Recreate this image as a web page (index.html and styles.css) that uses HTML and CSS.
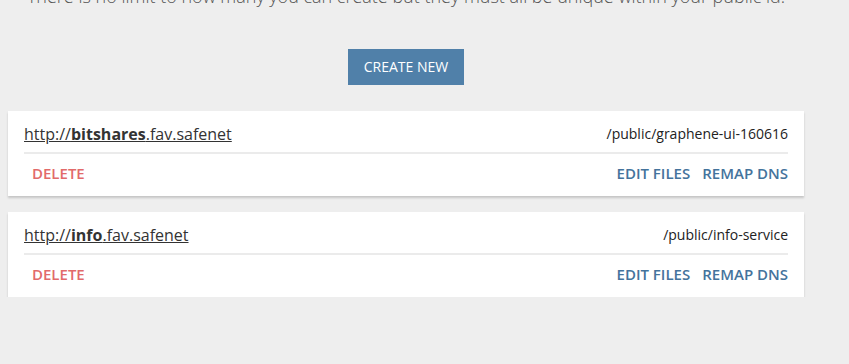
FILE: index.html
```html
<!DOCTYPE html>
<html>
<head>
<meta charset="utf-8">
<link rel="stylesheet" href="styles.css">
</head>
<body>
<div class="page">
  <p class="intro">There is no limit to how many you can create but they must all be unique within your public id.</p>
  <div class="create-row"><button class="btn-create">CREATE NEW</button></div>
  <div class="card">
    <div class="card-head">
      <a class="site-link" href="#">http://<b>bitshares</b>.fav.safenet</a>
      <span class="path">/public/graphene-ui-160616</span>
    </div>
    <div class="card-actions">
      <span class="act act-delete">DELETE</span>
      <div class="act-group">
        <span class="act act-blue">EDIT FILES</span>
        <span class="act act-blue">REMAP DNS</span>
      </div>
    </div>
  </div>
  <div class="card">
    <div class="card-head">
      <a class="site-link" href="#">http://<b>info</b>.fav.safenet</a>
      <span class="path">/public/info-service</span>
    </div>
    <div class="card-actions">
      <span class="act act-delete">DELETE</span>
      <div class="act-group">
        <span class="act act-blue">EDIT FILES</span>
        <span class="act act-blue">REMAP DNS</span>
      </div>
    </div>
  </div>
</div>
</body>
</html>
```
FILE: styles.css
```css
html, body {
  margin: 0;
  padding: 0;
  background: #eeeeee;
  font-family: "Open Sans", "Liberation Sans", sans-serif;
  overflow: hidden;
}
.page {
  width: 796px;
  margin-left: 8px;
}
.intro {
  margin: -17px 0 0 0;
  font-size: 18px;
  line-height: 27px;
  font-weight: 300;
  color: #555555;
  text-align: center;
}
.create-row {
  display: flex;
  justify-content: center;
  margin-top: 39px;
}
.btn-create {
  height: 36px;
  padding: 0 16px;
  border: none;
  background: #5080a9;
  color: #ffffff;
  font-family: "Open Sans", "Liberation Sans", sans-serif;
  font-size: 14px;
  line-height: 36px;
  cursor: pointer;
}
.card {
  background: #ffffff;
  margin-top: 16px;
  padding: 0 16px;
  box-shadow: 0 2px 2px rgba(0, 0, 0, 0.17);
}
.create-row + .card {
  margin-top: 26px;
}
.card-head {
  display: flex;
  justify-content: space-between;
  align-items: center;
  padding: 12px 0 7px;
  border-bottom: 2px solid #ebebeb;
}
.site-link {
  font-size: 16px;
  line-height: 22px;
  color: #333333;
  text-decoration: underline;
}
.site-link b {
  font-weight: 700;
}
.path {
  font-size: 14px;
  line-height: 22px;
  color: #222222;
}
.card-actions {
  display: flex;
  justify-content: space-between;
  align-items: center;
  height: 38px;
  padding-bottom: 4px;
}
.act {
  font-size: 15px;
  font-weight: 600;
  line-height: 38px;
  cursor: pointer;
}
.act-delete {
  color: #e26a6a;
  padding-left: 8px;
}
.act-group {
  display: flex;
  gap: 12px;
}
.act-blue {
  color: #44739c;
}
```
